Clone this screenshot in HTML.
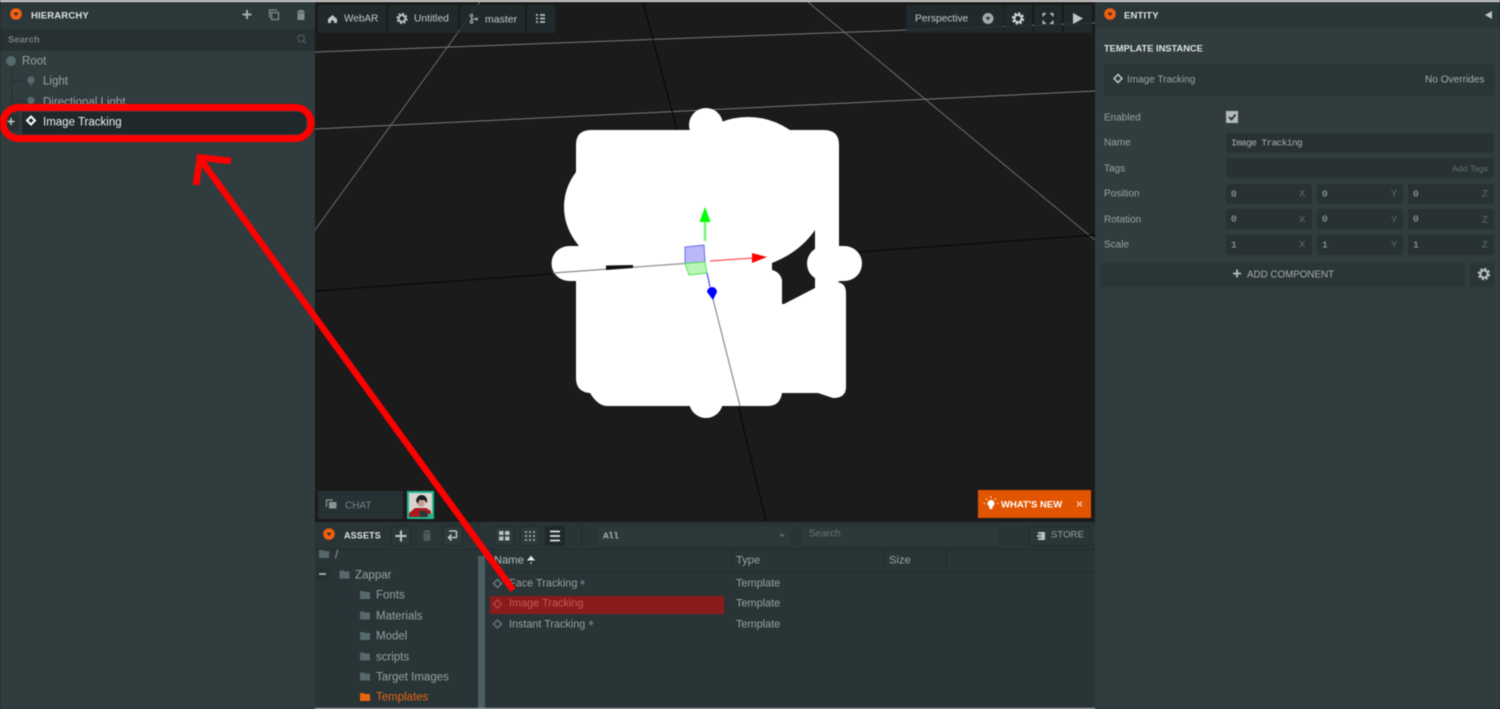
<!DOCTYPE html>
<html><head><meta charset="utf-8">
<style>
html,body{margin:0;padding:0;background:#1a1a1a;}
#p{position:relative;width:1500px;height:709px;overflow:hidden;background:#1b1b1b;font-family:"Liberation Sans",sans-serif;color:#a9b1b2;filter:blur(.4px);}
.b{position:absolute;}
.t{position:absolute;white-space:nowrap;line-height:1;font-size:11.5px;transform:translateY(1.5px);}
.m{font-family:"Liberation Mono",monospace;font-size:9.5px;color:#a9b1b2;}
.h{font-weight:bold;color:#dfe3e3;font-size:9.5px;letter-spacing:.15px;}
.l{color:#9aa3a4;font-size:10px;}
.ax{color:#5f6d6f;font-size:9.5px;}
.tb{background:rgba(33,43,46,.88);}
svg{position:absolute;left:0;top:0;}
</style></head><body><div id="p">

<!-- viewport -->
<svg width="1500" height="709" viewBox="0 0 1500 709">
<g fill="none" stroke-width="1">
<path d="M315 52L1095 23M315 129L1095 91" stroke="#77797a"/>
<path d="M480 2L315 230M808 2L1095 240" stroke="#6a6c6d"/>
<path d="M643 2L677 130M738 405L766 521M315 291L1095 235" stroke="#050505"/>
</g>
<g fill="#fff">
<path d="M591 130H824Q839 130 839 145V282H835Q846 282 846 293V387Q846 398 833 398L818 393H782Q780 406 768 406H607Q598 406 590 393Q576 392 576 378V281H569A17.500 17.500 0 0 1 569 246H579Q564 228 564 207Q564 188 576 172V145Q576 130 591 130Z"/>
<circle cx="706" cy="125" r="17"/><circle cx="706" cy="401" r="17"/>
<circle cx="748" cy="191" r="74"/>
</g>
<path d="M772 263Q800 252 815 230V288L784 304H782V280Q780 272 772 270Z" fill="#1b1b1b"/>
<rect x="807" y="246" width="55" height="35" rx="17.500" fill="#fff"/>
<path d="M553 273L705 262M713 299L740 406" stroke="#8a8a8a" stroke-width="1.200" fill="none"/>
<path d="M606 265.500L633 265V268L606 270Z" fill="#111"/>
<path d="M685 247L704 245L705 262L685 263.500Z" fill="#b9b9f7" stroke="#6a6af0" stroke-width="1"/>
<path d="M685 263.500L705 262L707 273L689 275Z" fill="#b9f7b9" stroke="#55e055" stroke-width="1"/>
<path d="M705 222V241" stroke="#77f577" stroke-width="2.500"/>
<path d="M705 207L710.500 222H699.500Z" fill="#0f0"/>
<path d="M710 261L753 258" stroke="#f55" stroke-width="1.300"/>
<path d="M752 253L767 257L752 263Z" fill="#f00"/>
<path d="M707 273L710 287" stroke="#55f" stroke-width="1.300"/>
<path d="M707 292A5 5 0 0 1 717 292L713 300Z" fill="#00f"/>
</svg>

<div class="b" style="left:0;top:0;width:1500px;height:1.500px;background:#d8d8d8;z-index:3"></div>

<!-- top toolbar -->
<div class="b tb" style="left:318px;top:5px;width:68px;height:28px"></div>
<div class="b tb" style="left:388px;top:5px;width:70px;height:28px"></div>
<div class="b tb" style="left:460px;top:5px;width:65px;height:28px"></div>
<div class="b tb" style="left:527px;top:5px;width:28px;height:28px"></div>
<div class="b tb" style="left:906px;top:5px;width:97px;height:28px"></div>
<div class="b tb" style="left:1004px;top:5px;width:28px;height:28px"></div>
<div class="b tb" style="left:1034px;top:5px;width:28px;height:28px"></div>
<div class="b tb" style="left:1064px;top:5px;width:28px;height:28px"></div>

<!-- chat -->
<div class="b" style="left:318px;top:491px;width:85px;height:28px;background:#263134"></div>
<div class="b" style="left:407px;top:491px;width:27px;height:28px;background:#1fb592"></div>
<svg width="1500" height="709" viewBox="0 0 1500 709">
<rect x="409" y="493" width="23" height="24" fill="#d9d4d0"/>
<path d="M409 517V513L415 508H426L431 511V517Z" fill="#a81c20"/>
<rect x="420" y="511" width="7" height="6" fill="#26383a"/>
<rect x="428" y="514" width="6" height="5" fill="#1fb592"/>
<circle cx="421" cy="503" r="3.800" fill="#c8a08c"/>
<path d="M416 501Q417 495 422 495Q428 496 427 503L424 500H419L418 504Z" fill="#1c1c20"/>
</svg>
<!-- what's new -->
<div class="b" style="left:978px;top:490px;width:113px;height:28px;background:#e25500"></div>

<!-- hierarchy -->
<div class="b" style="left:0;top:0;width:315px;height:709px;background:#303c3e"></div>
<div class="b" style="left:0;top:0;width:315px;height:29px;background:#2b3739"></div>
<div class="b" style="left:0;top:29px;width:315px;height:22px;background:#273133"></div>
<div class="b" style="left:22px;top:112px;width:284px;height:22px;background:#1f282a"></div>
<div class="b" style="left:5px;top:113px;width:14px;height:18px;background:#273133"></div>

<!-- entity -->
<div class="b" style="left:1095px;top:0;width:405px;height:709px;background:#303c3e"></div>
<div class="b" style="left:1095px;top:0;width:405px;height:28px;background:#2a3638"></div>
<div class="b" style="left:1104px;top:64px;width:391px;height:32px;background:#2a3537;border-radius:4px"></div>
<div class="b" style="left:1226px;top:133px;width:268px;height:20px;background:#283234;border-radius:2px"></div>
<div class="b" style="left:1226px;top:158px;width:268px;height:20px;background:#283234;border-radius:2px"></div>
<div class="b" style="left:1226px;top:184px;width:86px;height:20px;background:#283234;border-radius:2px"></div>
<div class="b" style="left:1317px;top:184px;width:86px;height:20px;background:#283234;border-radius:2px"></div>
<div class="b" style="left:1408px;top:184px;width:86px;height:20px;background:#283234;border-radius:2px"></div>
<div class="b" style="left:1226px;top:209px;width:86px;height:20px;background:#283234;border-radius:2px"></div>
<div class="b" style="left:1317px;top:209px;width:86px;height:20px;background:#283234;border-radius:2px"></div>
<div class="b" style="left:1408px;top:209px;width:86px;height:20px;background:#283234;border-radius:2px"></div>
<div class="b" style="left:1226px;top:235px;width:86px;height:20px;background:#283234;border-radius:2px"></div>
<div class="b" style="left:1317px;top:235px;width:86px;height:20px;background:#283234;border-radius:2px"></div>
<div class="b" style="left:1408px;top:235px;width:86px;height:20px;background:#283234;border-radius:2px"></div>
<div class="b" style="left:1100px;top:263px;width:365px;height:24px;background:#2a3537;border-radius:2px"></div>
<div class="b" style="left:1470px;top:263px;width:24px;height:24px;background:#2a3537;border-radius:2px"></div>
<div class="b" style="left:1226px;top:111px;width:12px;height:12px;background:#b4b9ba"></div>

<!-- assets -->
<div class="b" style="left:315px;top:522px;width:780px;height:187px;background:#293437"></div>
<div class="b" style="left:315px;top:549px;width:780px;height:1px;background:#222c2e"></div>
<div class="b" style="left:485px;top:572px;width:610px;height:1px;background:#222c2e"></div>
<div class="b" style="left:478px;top:556px;width:7px;height:153px;background:#4b5f62"></div>
<div class="b" style="left:478px;top:522px;width:1px;height:27px;background:#222c2e"></div>
<div class="b" style="left:581px;top:522px;width:1px;height:27px;background:#222c2e"></div>
<div class="b" style="left:731px;top:550px;width:1px;height:22px;background:#222c2e"></div>
<div class="b" style="left:884px;top:550px;width:1px;height:22px;background:#222c2e"></div>
<div class="b" style="left:946px;top:550px;width:1px;height:22px;background:#222c2e"></div>
<div class="b" style="left:597px;top:526px;width:193px;height:20px;background:#2c383a"></div>
<div class="b" style="left:803px;top:526px;width:195px;height:20px;background:#2c383a"></div>
<div class="b" style="left:1029px;top:526px;width:61px;height:20px;background:#2a3537;border:1px solid #222c2e;box-sizing:border-box;border-radius:2px"></div>
<div class="b" style="left:391px;top:526px;width:20px;height:20px;background:#2c383a;border:1px solid #222c2e;box-sizing:border-box;border-radius:2px"></div>
<div class="b" style="left:417px;top:526px;width:20px;height:20px;background:#2a3537;border-radius:2px"></div>
<div class="b" style="left:443px;top:526px;width:20px;height:20px;background:#2c383a;border:1px solid #222c2e;box-sizing:border-box;border-radius:2px"></div>
<div class="b" style="left:494px;top:526px;width:20px;height:20px;background:#2c383a;border:1px solid #222c2e;box-sizing:border-box;border-radius:2px"></div>
<div class="b" style="left:520px;top:526px;width:20px;height:20px;background:#2c383a;border:1px solid #222c2e;box-sizing:border-box;border-radius:2px"></div>
<div class="b" style="left:545px;top:526px;width:20px;height:20px;background:#1f282a;border-radius:2px"></div>
<div class="b" style="left:490px;top:596px;width:234px;height:18px;background:#8b1a1a"></div>
<div class="b" style="left:315px;top:708px;width:780px;height:1px;background:#cfd3d3"></div>

<!-- icons -->
<svg width="1500" height="709" viewBox="0 0 1500 709">
<defs>
<g id="or"><circle r="5.800" fill="#f0600f"/><path d="M-2.500 -1.300H2.500L0 2Z" fill="#2a2a2a"/></g>
<g id="gear"><circle r="3.600" fill="none" stroke="currentColor" stroke-width="2"/><circle r="5.300" fill="none" stroke="currentColor" stroke-width="1.800" stroke-dasharray="2.400 1.760"/></g>
<path id="fo" d="M-5 -4H-1L0 -3H5V4H-5Z"/>
<path id="dm" d="M0 -4L4 0L0 4L-4 0Z"/>
</defs>

<use href="#or" x="16" y="14"/><use href="#or" x="1110" y="14"/><use href="#or" x="329" y="534"/>

<!-- hierarchy header icons -->
<path d="M247 10V19M242.500 14.500H251.500" stroke="#a4acad" stroke-width="2"/>
<path d="M269.500 17.500V10H277M271.500 12.500H278.500V19.500H271.500Z" fill="none" stroke="#7f8a8c" stroke-width="1.300"/>
<path d="M297 12H305M299 12V10.500H303V12M298 13.500H304V19.500H298Z" fill="#7f8a8c" stroke="#7f8a8c" stroke-width="1"/>
<circle cx="301" cy="38.500" r="3.300" fill="none" stroke="#4f5d5f" stroke-width="1.200"/>
<path d="M303.500 41L306 43.500" stroke="#4f5d5f" stroke-width="1.200"/>

<!-- hierarchy tree -->
<path d="M12 66V122H24M12 81H26M12 101H26" stroke="#263033" stroke-width="1" fill="none"/>
<circle cx="11" cy="61" r="5" fill="#566a6d"/>
<circle cx="31" cy="80" r="3.700" fill="#566a6d"/><rect x="29.800" y="83" width="2.400" height="3" fill="#46585a"/>
<circle cx="31" cy="100.500" r="3.700" fill="#566a6d"/>
<path d="M11 118V125M7.500 121.500H14.500" stroke="#c4cacb" stroke-width="1.500"/>
<use href="#dm" x="31" y="120.500" fill="none" stroke="#fff" stroke-width="2"/>

<!-- toolbar icons -->
<path d="M328 19L332.500 15L337 19V23H334V20.500H331V23H328Z" fill="#c0c6c7"/>
<use href="#gear" x="402" y="18.500" color="#c0c6c7" transform="translate(40.200 1.850) scale(.9)"/>
<g fill="none" stroke="#b0b7b8" stroke-width="1"><circle cx="471.500" cy="15.500" r="1.300"/><circle cx="471.500" cy="22" r="1.300"/><circle cx="476.500" cy="19" r="1"/><path d="M471.500 17V20.500M471.500 19H475"/></g>
<path d="M536 15H538M536 18.500H538M536 22H538M540 15H545M540 18.500H545M540 22H545" stroke="#b8bfc0" stroke-width="1.700"/>
<circle cx="988" cy="18.500" r="5.500" fill="#a3a9aa"/><path d="M985.500 17H990.500L988 20.500Z" fill="#2a3335"/>
<use href="#gear" x="1018" y="18.500" color="#d0d4d5"/>
<path d="M1042.500 13H1046.500L1042.500 17ZM1053.500 13V17L1049.500 13ZM1042.500 24V20L1046.500 24ZM1053.500 24H1049.500L1053.500 20Z" fill="#c0c6c7"/>
<path d="M1073 13L1083 18.500L1073 24Z" fill="#c0c6c7"/>
<path d="M1492 11L1485 15L1492 19Z" fill="#bfc5c6"/>

<!-- entity icons -->
<use href="#dm" x="1118" y="78.500" fill="none" stroke="#b8bfc0" stroke-width="1.600"/>
<path d="M1229 117L1231.500 119.500L1235.500 114.500" fill="none" stroke="#263032" stroke-width="1.800"/>
<path d="M1237 269.500V277.500M1233 273.500H1241" stroke="#b8bfc0" stroke-width="1.800"/>
<use href="#gear" x="1484" y="274" color="#b8bfc0"/>

<!-- chat icon -->
<g fill="none" stroke="#8a9496" stroke-width="1.300"><path d="M326.500 507V500H333"/><rect x="329" y="502" width="7.500" height="6.500" fill="#8a9496" stroke="none"/></g>
<!-- what's new -->
<circle cx="991" cy="503.500" r="3.500" fill="#fff"/><rect x="989.500" y="506" width="3" height="3" fill="#fff"/>
<path d="M991 496V498M985 503.500H983.500M998.500 503.500H997M986 498.500L987.300 499.800M996 498.500L994.700 499.800" stroke="#fdd" stroke-width="1"/>
<path d="M1077 501.500L1082 506.500M1082 501.500L1077 506.500" stroke="#f3b9a0" stroke-width="1.500"/>

<!-- assets header icons -->
<path d="M401 530.500V541.500M395.500 536H406.500" stroke="#c0c6c7" stroke-width="2"/>
<path d="M423 532H431M425 532V530.500H429V532M424 533.500H430V540.500H424Z" fill="#4c5a5c" stroke="#4c5a5c" stroke-width="1"/>
<path d="M456.500 531V537.500H449M451.500 534.500L448.500 537.500L451.500 540.500M449 531H456.500" fill="none" stroke="#b8bfc0" stroke-width="1.600"/>
<path d="M499 531H503.500V535H499ZM505 531H509.500V535H505ZM499 536.500H503.500V540.500H499ZM505 536.500H509.500V540.500H505Z" fill="#b8bfc0"/>
<g fill="#98a1a2"><rect x="525" y="531" width="2" height="2"/><rect x="529" y="531" width="2" height="2"/><rect x="533" y="531" width="2" height="2"/><rect x="525" y="535" width="2" height="2"/><rect x="529" y="535" width="2" height="2"/><rect x="533" y="535" width="2" height="2"/><rect x="525" y="539" width="2" height="2"/><rect x="529" y="539" width="2" height="2"/><rect x="533" y="539" width="2" height="2"/></g>
<path d="M550 531.500H560M550 536H560M550 540.500H560" stroke="#dfe3e3" stroke-width="1.800"/>
<path d="M779 534H785L782 537.500Z" fill="#5a6769"/>
<path d="M1038 532H1045V540H1038V538H1041V534H1038Z" fill="#b8bfc0"/><rect x="1037" y="535" width="5" height="2" fill="#b8bfc0"/>

<!-- assets tree -->
<path d="M325 559V571M345 579V697H360M345 595H360M345 615H360M345 635.500H360M345 656H360M345 676.500H360M327 574H338" stroke="#263033" stroke-width="1" fill="none"/>
<rect x="317" y="567" width="12" height="14" fill="#252f31"/>
<path d="M319 574H326" stroke="#c0c6c7" stroke-width="1.500"/>
<g fill="#56686b">
<use href="#fo" x="324" y="554"/><use href="#fo" x="344.500" y="574.500"/>
<use href="#fo" x="365" y="595"/><use href="#fo" x="365" y="615.500"/><use href="#fo" x="365" y="636"/>
<use href="#fo" x="365" y="656.500"/><use href="#fo" x="365" y="676.500"/>
</g>
<use href="#fo" x="365" y="697" fill="#e9650f"/>

<!-- table -->
<path d="M531 562V564M531 556.500L534 560H528Z" fill="#e6e9e9" stroke="#e6e9e9" stroke-width="1"/>
<g fill="none" stroke-width="1.500">
<use href="#dm" x="497.500" y="583.500" stroke="#64787b"/>
<use href="#dm" x="497.500" y="604" stroke="#ad4444"/>
<use href="#dm" x="497.500" y="624" stroke="#64787b"/>
</g>
<circle cx="582.500" cy="582.500" r="2.200" fill="#5a6e71"/>
<circle cx="591" cy="623" r="2.200" fill="#5a6e71"/>
</svg>

<!-- text -->
<span class="t h" style="left:31px;top:10px">HIERARCHY</span>
<span class="t" style="left:8px;top:34px;font-size:9.500px;font-weight:bold;color:#75807f">Search</span>
<span class="t" style="left:22px;top:55px;font-size:11.500px;color:#9aa3a4">Root</span>
<span class="t" style="left:43px;top:75px;font-size:11.500px;color:#9aa3a4">Light</span>
<span class="t" style="left:43px;top:96px;font-size:11.500px;color:#9aa3a4">Directional Light</span>
<span class="t" style="left:43px;top:115.500px;font-size:11.500px;color:#eef0f0">Image Tracking</span>

<span class="t" style="left:344px;top:12.500px;font-size:10px;color:#c4cacb">WebAR</span>
<span class="t" style="left:414px;top:12.500px;font-size:10.300px;color:#c4cacb">Untitled</span>
<span class="t" style="left:485px;top:12.500px;font-size:10.500px;color:#c4cacb">master</span>
<span class="t" style="left:915px;top:12.500px;font-size:10.200px;color:#c4cacb">Perspective</span>

<span class="t h" style="left:1124px;top:9.500px">ENTITY</span>
<span class="t" style="left:1104px;top:42.500px;font-size:9.300px;font-weight:bold;color:#dfe3e3">TEMPLATE INSTANCE</span>
<span class="t" style="left:1127px;top:73.500px;font-size:10px;color:#9aa3a4">Image Tracking</span>
<span class="t" style="left:1425px;top:73.500px;font-size:10.100px;color:#a6adae">No Overrides</span>
<span class="t l" style="left:1104px;top:111.500px">Enabled</span>
<span class="t l" style="left:1104px;top:136.500px">Name</span>
<span class="t l" style="left:1104px;top:162.500px">Tags</span>
<span class="t l" style="left:1104px;top:187.500px">Position</span>
<span class="t l" style="left:1104px;top:213.500px">Rotation</span>
<span class="t l" style="left:1104px;top:238.500px">Scale</span>
<span class="t m" style="left:1231px;top:136.500px;letter-spacing:-.63px">Image Tracking</span>
<span class="t" style="left:1452px;top:162.500px;font-size:8.700px;color:#5f6d6f">Add Tags</span>
<span class="t m" style="left:1231px;top:187.500px">0</span><span class="t m" style="left:1322px;top:187.500px">0</span><span class="t m" style="left:1413px;top:187.500px">0</span>
<span class="t m" style="left:1231px;top:213px">0</span><span class="t m" style="left:1322px;top:213px">0</span><span class="t m" style="left:1413px;top:213px">0</span>
<span class="t m" style="left:1231px;top:238.500px">1</span><span class="t m" style="left:1322px;top:238.500px">1</span><span class="t m" style="left:1413px;top:238.500px">1</span>
<span class="t ax" style="left:1299px;top:187.500px">X</span><span class="t ax" style="left:1391px;top:187.500px">Y</span><span class="t ax" style="left:1482px;top:187.500px">Z</span>
<span class="t ax" style="left:1299px;top:213.500px">X</span><span class="t ax" style="left:1391px;top:213.500px">Y</span><span class="t ax" style="left:1482px;top:213.500px">Z</span>
<span class="t ax" style="left:1299px;top:238.500px">X</span><span class="t ax" style="left:1391px;top:238.500px">Y</span><span class="t ax" style="left:1482px;top:238.500px">Z</span>
<span class="t" style="left:1247px;top:268.500px;font-size:9.800px;color:#a6adae">ADD COMPONENT</span>

<span class="t" style="left:345px;top:500px;font-size:10px;color:#76838a">CHAT</span>
<span class="t" style="left:1001px;top:498.500px;font-size:9.500px;font-weight:bold;color:#fff">WHAT'S NEW</span>

<span class="t h" style="left:344px;top:529.500px;font-size:9px">ASSETS</span>
<span class="t m" style="left:603px;top:530px;letter-spacing:-.6px;font-weight:bold">All</span>
<span class="t" style="left:809px;top:528px;font-size:10px;color:#667476">Search</span>
<span class="t" style="left:1051px;top:529px;font-size:9.600px;color:#98a1a2">STORE</span>
<span class="t" style="left:335px;top:548.500px;font-size:11.500px;color:#98a1a2">/</span>
<span class="t" style="left:355px;top:568.500px;font-size:11.500px;color:#98a1a2">Zappar</span>
<span class="t" style="left:376px;top:589px;font-size:11.500px;color:#98a1a2">Fonts</span>
<span class="t" style="left:376px;top:609.500px;font-size:11.500px;color:#98a1a2">Materials</span>
<span class="t" style="left:376px;top:630px;font-size:11.500px;color:#98a1a2">Model</span>
<span class="t" style="left:376px;top:650.500px;font-size:11.500px;color:#98a1a2">scripts</span>
<span class="t" style="left:376px;top:671px;font-size:11.500px;color:#98a1a2">Target Images</span>
<span class="t" style="left:376px;top:691px;font-size:11.500px;color:#e9650f">Templates</span>
<span class="t" style="left:494px;top:554px;font-size:11.200px;color:#b6bcbd">Name</span>
<span class="t" style="left:736px;top:554px;font-size:11.200px;color:#98a1a2">Type</span>
<span class="t" style="left:889px;top:554px;font-size:11.200px;color:#98a1a2">Size</span>
<span class="t" style="left:509px;top:577px;font-size:10.900px;color:#98a1a2">Face Tracking</span>
<span class="t" style="left:509px;top:597px;font-size:10.900px;color:#c9595b">Image Tracking</span>
<span class="t" style="left:509px;top:618px;font-size:10.800px;color:#98a1a2">Instant Tracking</span>
<span class="t" style="left:736px;top:577px;font-size:10.900px;color:#98a1a2">Template</span>
<span class="t" style="left:736px;top:597px;font-size:10.900px;color:#98a1a2">Template</span>
<span class="t" style="left:736px;top:618px;font-size:10.900px;color:#98a1a2">Template</span>

<!-- red annotations -->
<svg width="1500" height="709" viewBox="0 0 1500 709">
<rect x="3" y="107.500" width="308" height="31" rx="15.500" fill="none" stroke="#f00" stroke-width="7"/>
<path d="M513 590L201 160" stroke="#f00" stroke-width="6.500" fill="none"/>
<path d="M231 161L200 157.500L196 185" stroke="#f00" stroke-width="6.500" fill="none"/>
</svg>
</div></body></html>
